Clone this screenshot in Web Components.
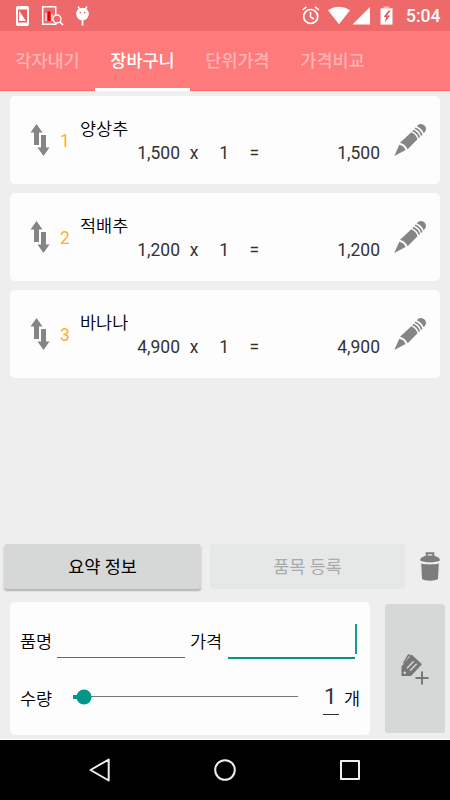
<!DOCTYPE html>
<html lang="ko">
<head>
<meta charset="utf-8">
<meta name="viewport" content="width=device-width, initial-scale=1">
<title>장바구니</title>
<style>
  body {
    margin: 0;
    background: #eee;
    font-family: Roboto, "Noto Sans CJK KR", sans-serif;
    font-size: 17.5px;
    font-weight: 350;
    line-height: 24px;
    color: #000;
  }
</style>
</head>
<body>
<cart-app></cart-app>

<script>
class StatusBar extends HTMLElement {
  constructor() {
    super();
    this.shadow = this.attachShadow({ mode: "open" });
  }

  connectedCallback() {
    this.shadow.innerHTML = `
      <style>
  :host {
    display: flex;
    align-items: center;
    height: 31px;
    box-sizing: border-box;
    padding: 0 9px 0 15px;
    background: #ee6a6a;
    color: #fff;
  }
  svg { display: block; flex: none; }
  .left { display: flex; flex: 1; }
  .time { font-size: 17.5px; font-weight: 500; line-height: 31px; padding-top: 2px; width: 35px; }
</style>
<div class="left">
  <svg width="75" height="31" viewBox="15 0 75 31">
    <rect x="16" y="6" width="13" height="20" rx="2" fill="#fff"/>
    <path d="M18 9.500h9v13h-9z" fill="#ee5a5a"/>
    <path d="M19 10.500l7 10.500h-7z" fill="#fff"/>
    <path d="M42.700 6.700h13v17.600h-13z" fill="none" stroke="#fff" stroke-width="1.500"/>
    <path d="M45 13h2v8h-2zM51 14h2v7h-2z" fill="#ffc9c9"/>
    <path d="M47.500 11.500h3V21h-3z" fill="#e60000"/>
    <circle cx="57" cy="19" r="4" fill="#ee6a6a" stroke="#fff" stroke-width="1.300"/>
    <path d="M60 22l3 3" stroke="#fff" stroke-width="1.700"/>
    <path d="M78 6.500l2 3M87 6.500l-2 3" stroke="#fff" stroke-width="1.400"/>
    <circle cx="82.500" cy="14" r="6.300" fill="#fff"/>
    <path d="M79.500 12.500h1.500M84 12.500h1.500" stroke="#ee6a6a" stroke-width="1.300"/>
    <path d="M82.500 20v5.500" stroke="#fff" stroke-width="1.700"/>
  </svg>
</div>
<svg width="106" height="31" viewBox="300 0 106 31">
  <circle cx="310.700" cy="16.500" r="7" fill="none" stroke="#fff" stroke-width="1.700"/>
  <path d="M310.500 12v5l3.500 2M302.500 10l4-3.200M319 10l-4-3.200" fill="none" stroke="#fff" stroke-width="1.500"/>
  <path d="M328 10.200Q339 3.500 350 10.200L339 24.300z" fill="#fff"/>
  <path d="M370 7v17.500h-17.500z" fill="#fff"/>
  <path d="M383.500 6.300h6v2h-6z" fill="#f7b0b0"/>
  <path d="M380.500 8.300h12v16.300h-12z" fill="#fff"/>
  <path d="M388.500 10.500l-5 6.500h2.700l-1.500 5.500 5.500-7h-3l3.500-5z" fill="#ee5a5a"/>
</svg>
<span class="time">5:04</span>
      `;
  }
}

class TabItem extends HTMLElement {
  constructor() {
    super();
    this.shadow = this.attachShadow({ mode: "open" });
  }

  connectedCallback() {
    this.shadow.innerHTML = `
      <style>
  :host {
    width: 95px;
    height: 60px;
    box-sizing: border-box;
    line-height: 61px;
    text-align: center;
    font-weight: 500;
    color: #ffb4b4;
    border-bottom: 1px solid #ff6c6c;
  }
  :host([active]) {
    color: #fff;
    border-bottom: 3px solid #fff;
  }
</style>
<slot></slot>
      `;
  }
}

class TabStrip extends HTMLElement {
  constructor() {
    super();
    this.shadow = this.attachShadow({ mode: "open" });
  }

  connectedCallback() {
    this.shadow.innerHTML = `
      <style>
  :host {
    display: flex;
    height: 60px;
    background: #ff7b7b;
  }
  .rest {
    flex: 1;
    border-bottom: 1px solid #ff6c6c;
  }
</style>
<slot></slot>
<div class="rest"></div>
      `;
  }
}

class CartItem extends HTMLElement {
  constructor() {
    super();
    this.shadow = this.attachShadow({ mode: "open" });
  }

  connectedCallback() {
    const price = this.getAttribute("price");
    const count = this.getAttribute("count");
    const total = this.getAttribute("total");
    this.shadow.innerHTML = `
      <style>
  :host {
    display: grid;
    grid-template-columns: 30px 20px 300px 60px;
    height: 88px;
    box-sizing: border-box;
    padding-left: 20px;
    align-items: center;
    background: #fdfdfd;
    border-radius: 5px;
  }
  svg { display: block; }
  .no { color: #ffb01f; font-weight: 400; padding-top: 2px; }
  .info { padding-top: 2px; }
  .sum {
    display: grid;
    grid-template-columns: 100px 28px 21px 30px 1fr;
    text-align: right;
    font-weight: 400;
    color: #333;
  }
  .sum span:nth-child(2) { text-align: center; }
</style>
<svg width="20" height="32" viewBox="0 0 20 32" fill="#858585">
  <path d="M6.500 0l6 8.500H9V21H4V8.500H.5z"/>
  <path d="M13.500 32l-6-8.500H11V11h5v12.500h3.500z"/>
</svg>
<div class="no">${this.getAttribute("no")}</div>
<div class="info">
  <div class="name"><slot></slot></div>
  <div class="sum"><span>${price}</span><span>x</span><span>${count}</span><span>=</span><span>${total}</span></div>
</div>
<svg width="60" height="40" viewBox="380 120 60 40">
  <path d="M394.300 156l5-11.300c3 .6 5.300 2.600 6.300 5.300z" fill="#858585"/>
  <path d="M400 142.800l11.300-10.600c3 1.200 5.400 3.700 6.200 7L407.700 149.300c-1.600-3.400-4.200-5.700-7.700-6.500z" fill="#858585"/>
  <path d="M412.800 130.600c3.200 1.200 5.600 3.700 6.500 7M415 128.300c3.300 1.200 5.800 3.700 6.700 7.200" fill="none" stroke="#858585" stroke-width="1.700"/>
  <path d="M416.700 126.200l1.900-1.600c4-2.500 9 2.200 6.900 6.400l-1.800 2.300c-1.200-3.400-3.600-5.800-7-7.100z" fill="#858585"/>
</svg>
      `;
  }
}

class FlatButton extends HTMLElement {
  constructor() {
    super();
    this.shadow = this.attachShadow({ mode: "open" });
  }

  connectedCallback() {
    this.shadow.innerHTML = `
      <style>
  :host {
    display: flex;
    align-items: center;
    justify-content: center;
    box-sizing: border-box;
    border-radius: 3px;
    background: #d6d8d7;
    font-weight: 400;
  }
  :host([raised]) { box-shadow: 0 2px 2px rgba(0, 0, 0, .25); }
  :host([disabled]) { background: #e6e8e7; color: #a9abaa; }
</style>
<slot></slot>
      `;
  }
}

class TextField extends HTMLElement {
  constructor() {
    super();
    this.shadow = this.attachShadow({ mode: "open" });
  }

  connectedCallback() {
    this.shadow.innerHTML = `
      <style>
  :host {
    display: flex;
    flex: none;
    justify-content: flex-end;
    box-sizing: border-box;
    width: 128px;
    height: 34px;
    border-bottom: 1px solid #666;
  }
  :host([focused]) {
    width: 127px;
    height: 35px;
    border-bottom: 2px solid #009688;
  }
  .caret { display: none; }
  :host([focused]) .caret {
    display: block;
    width: 2px;
    height: 30px;
    margin-right: -2px;
    background: #159c8f;
  }
</style>
<div class="caret"></div>
      `;
  }
}

class QuantitySlider extends HTMLElement {
  constructor() {
    super();
    this.shadow = this.attachShadow({ mode: "open" });
  }

  connectedCallback() {
    this.shadow.innerHTML = `
      <style>
  :host { display: block; flex: none; width: 225px; height: 16px; }
  svg { display: block; }
</style>
<svg width="225" height="16" viewBox="0 0 225 16">
  <path d="M11 7h214v1H11z" fill="#777"/>
  <path d="M0 6h11v4H0z" fill="#009688"/>
  <circle cx="11" cy="8" r="7.600" fill="#009688"/>
</svg>
      `;
  }
}

class ItemForm extends HTMLElement {
  constructor() {
    super();
    this.shadow = this.attachShadow({ mode: "open" });
  }

  connectedCallback() {
    this.shadow.innerHTML = `
      <style>
  :host {
    display: block;
    box-sizing: border-box;
    width: 360px;
    height: 133px;
    padding: 22px 10px 0;
    background: #fdfdfd;
    border-radius: 5px;
  }
  .row { display: flex; height: 36px; }
  .label { flex: none; width: 37px; padding-top: 6px; }
  .price { width: 38px; margin-left: 5px; }
  .qty { height: 40px; margin-top: 20px; }
  .qty .label { width: 53px; padding-top: 7px; }
  quantity-slider { margin-top: 9px; }
  .num {
    width: 16px;
    height: 34px;
    margin-left: 25px;
    font-size: 22.500px;
    font-weight: 400;
    line-height: 32px;
    color: #333;
    text-indent: -1px;
    text-align: center;
    border-bottom: 1px solid #333;
  }
  .unit { margin-left: 5px; padding-top: 7px; }
</style>
<div class="row">
  <span class="label">품명</span><text-field></text-field>
  <span class="label price">가격</span><text-field focused></text-field>
</div>
<div class="row qty">
  <span class="label">수량</span>
  <quantity-slider></quantity-slider>
  <span class="num">1</span><span class="unit">개</span>
</div>
      `;
  }
}

class NavBar extends HTMLElement {
  constructor() {
    super();
    this.shadow = this.attachShadow({ mode: "open" });
  }

  connectedCallback() {
    this.shadow.innerHTML = `
      <style>
  :host {
    display: flex;
    justify-content: center;
    gap: 101px;
    height: 60px;
    align-items: center;
    background: #000;
  }
  svg { display: block; fill: none; stroke: #eee; stroke-width: 2; stroke-linejoin: round; }
</style>
<svg width="24" height="24" viewBox="0 0 24 24"><path d="M20.700 1.500v21L2.500 12z"/></svg>
<svg width="24" height="24" viewBox="0 0 24 24"><circle cx="12" cy="12" r="9.800"/></svg>
<svg width="24" height="24" viewBox="0 0 24 24"><path d="M3 3h18v18H3z"/></svg>
      `;
  }
}

class CartApp extends HTMLElement {
  constructor() {
    super();
    this.shadow = this.attachShadow({ mode: "open" });
  }

  connectedCallback() {
    this.shadow.innerHTML = `
      <style>
  :host {
    display: flex;
    flex-direction: column;
    width: 450px;
    height: 800px;
    overflow: hidden;
    background: #eee;
  }
  .list {
    flex: 1;
    display: flex;
    flex-direction: column;
    gap: 9px;
    padding: 5px 10px 0;
  }
  .actions {
    display: flex;
    height: 45px;
    padding-left: 4px;
    margin-bottom: 13px;
  }
  .summary { width: 197px; padding-top: 1px; }
  .register { width: 195px; margin-left: 9px; padding-top: 1px; }
  .trash { display: block; margin: 7px 0 0 14px; }
  .entry {
    display: flex;
    height: 137px;
    padding-left: 10px;
    border-bottom: 1px solid #fff;
  }
  .add { width: 60px; height: 129px; margin: 2px 0 0 15px; }
</style>
<status-bar></status-bar>
<tab-strip>
  <tab-item>각자내기</tab-item>
  <tab-item active>장바구니</tab-item>
  <tab-item>단위가격</tab-item>
  <tab-item>가격비교</tab-item>
</tab-strip>
<div class="list">
  <cart-item no="1" price="1,500" count="1" total="1,500">양상추</cart-item>
  <cart-item no="2" price="1,200" count="1" total="1,200">적배추</cart-item>
  <cart-item no="3" price="4,900" count="1" total="4,900">바나나</cart-item>
</div>
<div class="actions">
  <flat-button class="summary" raised>요약 정보</flat-button>
  <flat-button class="register" disabled>품목 등록</flat-button>
  <svg class="trash" width="22" height="31" viewBox="419 551 22 31">
    <path d="M426.700 557v-3.700h6.600v3.700" fill="none" stroke="#7d7d7d" stroke-width="2"/>
    <path d="M420 560.500c0-3 4-5 10-5s10 2 10 5c-2 1.200-6 1.800-10 1.800s-8-.6-10-1.800z" fill="#7d7d7d"/>
    <path d="M421.200 563.500c5 1.200 12.600 1.200 17.600 0L438 579c-3 2.300-13 2.300-16 0z" fill="#7d7d7d"/>
  </svg>
</div>
<div class="entry">
  <item-form></item-form>
  <flat-button class="add">
    <svg width="30" height="34" viewBox="400 651 30 34">
      <path d="M403.500 662.500l5-8.500 3 1.700" fill="none" stroke="#777" stroke-width="1.500"/>
      <path d="M411.500 653.500l10.500 9.700-11 11.800h-9.500v-9.500z" fill="#777"/>
      <path d="M407 667.200l6.700-7M410 669.700l6.700-7" stroke="#d6d8d7" stroke-width="1.400"/>
      <circle cx="404.800" cy="671.700" r="1.300" fill="#d6d8d7"/>
      <path d="M422 670.500v13M415.500 677h13" stroke="#777" stroke-width="2"/>
    </svg>
  </flat-button>
</div>
<nav-bar></nav-bar>
      `;
  }
}

window.customElements.define("status-bar", StatusBar);
window.customElements.define("tab-item", TabItem);
window.customElements.define("tab-strip", TabStrip);
window.customElements.define("cart-item", CartItem);
window.customElements.define("flat-button", FlatButton);
window.customElements.define("text-field", TextField);
window.customElements.define("quantity-slider", QuantitySlider);
window.customElements.define("item-form", ItemForm);
window.customElements.define("nav-bar", NavBar);
window.customElements.define("cart-app", CartApp);
</script>
</body>
</html>
